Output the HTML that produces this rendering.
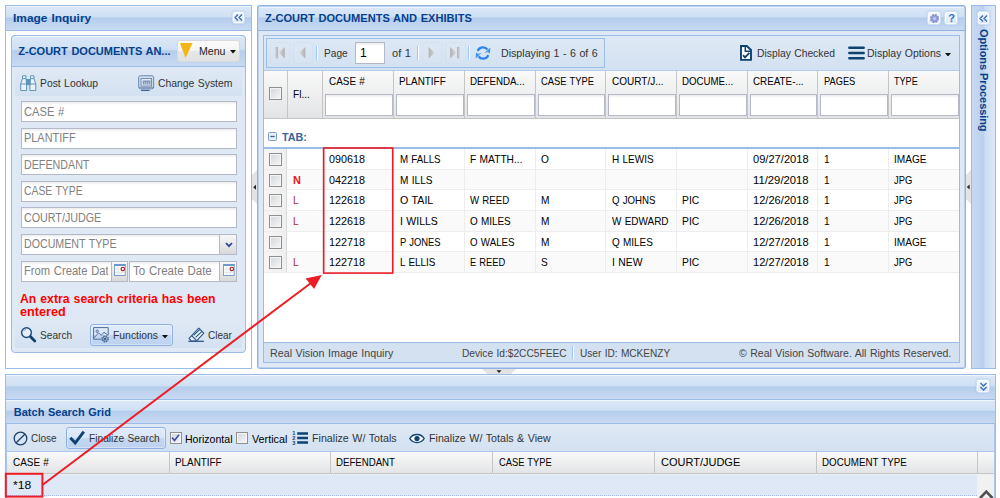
<!DOCTYPE html>
<html><head><meta charset="utf-8"><title>Image Inquiry</title>
<style>
*{box-sizing:border-box;margin:0;padding:0}
html,body{width:1000px;height:498px;overflow:hidden;background:#fff}
body{position:relative;font-family:"Liberation Sans",sans-serif;font-size:11px;color:#000}
.abs{position:absolute}
.hdr{position:absolute;background:linear-gradient(#dbe8f7 0%,#d0e0f4 44%,#b5cdec 50%,#c8daf2 100%);border:1px solid #99bce8;box-shadow:inset 0 1px 0 rgba(255,255,255,.6)}
.tool{position:absolute;border:1px solid #cfe0f6;border-radius:3px;background:linear-gradient(#f6faff,#d6e6fa);box-shadow:inset 0 0 0 1px rgba(255,255,255,.9),0 0 0 1px rgba(160,190,230,.25)}
.t{position:absolute;white-space:pre;transform-origin:0 0}
.fld{position:absolute;border:1px solid #b5b8c8;background:linear-gradient(#ececec 0,#fff 3px) #fff}
.trg{position:absolute;border:1px solid #b5b8c8;border-left:0;background:linear-gradient(#f7f7f7,#d9d9d9)}
.btn{position:absolute;border:1px solid #8fb1e2;border-radius:3px;background:linear-gradient(#e0ebfa 0,#d8e6f8 48%,#c3d7f2 52%,#bdd2ef 100%);box-shadow:inset 0 0 0 1px rgba(255,255,255,.35)}
.gh{position:absolute;background:linear-gradient(#f9f9f9,#e3e4e6);border-right:1px solid #c5c5c5;border-bottom:1px solid #c5c5c5}
.cb{position:absolute;width:13px;height:13px;border:1px solid #8e8f8f;background:linear-gradient(135deg,#d2d6db,#f7f7f7);box-shadow:inset 0 0 0 1px #f5f5f5}
</style></head><body>
<div class="abs" style="left:5px;top:5px;width:247px;height:364px;border:1px solid #99bce8;background:#fff"></div>
<div class="hdr" style="left:5px;top:5px;width:247px;height:26px;"></div>
<div class="t" style="left:12.5px;top:12px;font-size:11px;line-height:12px;color:#04408c;font-weight:bold;word-spacing:0.55px;transform:scaleX(1.0849);">Image Inquiry</div>
<div class="tool" style="left:232px;top:11px;width:13px;height:13px;"></div>
<svg class="abs" style="left:234px;top:14px" width="9" height="7" viewBox="0 0 9 7"><path d="M4 .5 L1 3.5 L4 6.5 M8 .5 L5 3.5 L8 6.5" fill="none" stroke="#3b6cb5" stroke-width="1.3"/></svg>
<div class="abs" style="left:11px;top:35px;width:235px;height:318px;border:1px solid #99bce8;border-radius:4px;background:#dfe9f6"></div>
<div class="hdr" style="left:11px;top:35px;width:235px;height:32px;border-radius:4px 4px 0 0"></div>
<div class="t" style="left:18.3px;top:45px;font-size:11px;line-height:12px;color:#04408c;font-weight:bold;word-spacing:0.55px;">Z-COURT DOCUMENTS AN...</div>
<div class="abs" style="left:177px;top:40px;width:63px;height:22px;border:1px solid #d9d9d9;border-radius:3px;background:linear-gradient(#fbfbfb 0,#f4f4f4 48%,#e6e6e6 52%,#e2e2e2 100%)"></div>
<svg class="abs" style="left:179px;top:42px" width="14" height="17" viewBox="0 0 14 17"><path d="M1 1 L13.5 1 L6.5 16 Z" fill="#f4b514"/></svg>
<div class="t" style="left:198.9px;top:45px;font-size:11px;line-height:12px;color:#222;transform:scaleX(0.9589);">Menu</div>
<svg class="abs" style="left:229.5px;top:50px" width="6" height="3.5" viewBox="0 0 6 3.5"><path d="M0 0h6L3 3.5z" fill="#111"/></svg>
<div class="abs" style="left:15px;top:70px;width:227px;height:26px;background:linear-gradient(#dfe9f5,#d3e1f1)"></div>
<svg class="abs" style="left:20px;top:75px" width="17" height="17" viewBox="0 0 17 17"><g fill="#eaf1f8" stroke="#5f93b8" stroke-width="1"><path d="M2.5 .8 H6 V3.6 L6.6 9 V15.5 H.7 V9 L2.5 3.6 Z"/><path d="M10.5 .8 H14 V3.6 L15.8 9 V15.5 H9.9 V9 L10.5 3.6 Z"/><path d="M.7 9 H6.6 M9.9 9 H15.8 M2.5 3.6 H6 M10.5 3.6 H14" fill="none"/><rect x="6.6" y="4.6" width="3.3" height="5" fill="#5f93b8"/></g></svg>
<div class="t" style="left:40.2px;top:77px;font-size:11px;line-height:12px;color:#333;word-spacing:0.55px;transform:scaleX(0.9416);">Post Lookup</div>
<svg class="abs" style="left:138px;top:75px" width="17" height="17" viewBox="0 0 17 17"><g stroke="#6484ad" stroke-width="1"><rect x=".7" y=".8" width="15" height="13" rx="1.8" fill="#d9e3f0"/><rect x="3" y="3.6" width="10.6" height="7.4" fill="#f4f7fb"/><path d="M1 12.4 H15.4" fill="none" stroke-width=".8"/><path d="M3 15.4 H11.6" fill="none" stroke="#46668f" stroke-width="1.3"/></g><rect x="4.6" y="5.4" width="8" height="4.2" fill="#7d98bb"/><path d="M6.6 7 V9.6 M8.6 7 V9.6 M10.6 7 V9.6" stroke="#dbe5f1" stroke-width=".6"/></svg>
<div class="t" style="left:157.5px;top:77px;font-size:11px;line-height:12px;color:#333;word-spacing:0.55px;transform:scaleX(0.9440);">Change System</div>
<div class="fld" style="left:21px;top:101.3px;width:216px;height:21px;"></div>
<div class="t" style="left:24.1px;top:105px;font-size:12px;line-height:14px;color:#808080;word-spacing:0.60px;transform:scaleX(0.9287);">CASE #</div>
<div class="fld" style="left:21px;top:127.8px;width:216px;height:21px;"></div>
<div class="t" style="left:24.1px;top:131px;font-size:12px;line-height:14px;color:#808080;transform:scaleX(0.9105);">PLANTIFF</div>
<div class="fld" style="left:21px;top:154.3px;width:216px;height:21px;"></div>
<div class="t" style="left:24.1px;top:158px;font-size:12px;line-height:14px;color:#808080;transform:scaleX(0.8917);">DEFENDANT</div>
<div class="fld" style="left:21px;top:180.8px;width:216px;height:21px;"></div>
<div class="t" style="left:24.1px;top:184px;font-size:12px;line-height:14px;color:#808080;word-spacing:0.60px;transform:scaleX(0.8651);">CASE TYPE</div>
<div class="fld" style="left:21px;top:207.3px;width:216px;height:21px;"></div>
<div class="t" style="left:24.1px;top:211px;font-size:12px;line-height:14px;color:#808080;transform:scaleX(0.8930);">COURT/JUDGE</div>
<div class="fld" style="left:21px;top:234px;width:199px;height:21px;"></div>
<div class="t" style="left:24.1px;top:237px;font-size:12px;line-height:14px;color:#808080;word-spacing:0.60px;transform:scaleX(0.8879);">DOCUMENT TYPE</div>
<div class="trg" style="left:220px;top:234px;width:17px;height:21px;"></div>
<svg class="abs" style="left:224.5px;top:241.5px" width="8" height="6" viewBox="0 0 8 6"><path d="M1 1 L4 4.2 L7 1" fill="none" stroke="#27479a" stroke-width="1.8"/></svg>
<div class="fld" style="left:21px;top:260.5px;width:91px;height:21px;overflow:hidden"></div>
<div class="abs" style="left:22px;top:261px;width:86px;height:19px;overflow:hidden">
<div class="t" style="left:2.1px;top:3px;font-size:12px;line-height:14px;color:#808080;word-spacing:0.60px;transform:scaleX(0.9339);">From Create Date</div>
</div>
<div class="trg" style="left:112px;top:260.5px;width:16px;height:21px;"></div>
<svg class="abs" style="left:114px;top:264px" width="12" height="12" viewBox="0 0 12 12"><rect x=".5" y=".5" width="10.6" height="11" fill="#fff" stroke="#7b9fd0"/><rect x="0" y="0" width="11.6" height="2" fill="#6f97cf"/><path d="M1 5.2h9.6M1 8.4h9.6M4 2.5v8.5M7.3 2.5v8.5" stroke="#e3e6ea" stroke-width="1.1" fill="none"/><circle cx="8.8" cy="5" r="1.7" fill="#fff" stroke="#a51717" stroke-width="1.1"/></svg>
<div class="fld" style="left:129px;top:260.5px;width:91px;height:21px;"></div>
<div class="t" style="left:132.5px;top:264px;font-size:12px;line-height:14px;color:#808080;word-spacing:0.60px;transform:scaleX(0.9619);">To Create Date</div>
<div class="trg" style="left:220px;top:260.5px;width:17px;height:21px;"></div>
<svg class="abs" style="left:222.5px;top:264px" width="12" height="12" viewBox="0 0 12 12"><rect x=".5" y=".5" width="10.6" height="11" fill="#fff" stroke="#7b9fd0"/><rect x="0" y="0" width="11.6" height="2" fill="#6f97cf"/><path d="M1 5.2h9.6M1 8.4h9.6M4 2.5v8.5M7.3 2.5v8.5" stroke="#e3e6ea" stroke-width="1.1" fill="none"/><circle cx="8.8" cy="5" r="1.7" fill="#fff" stroke="#a51717" stroke-width="1.1"/></svg>
<div class="t" style="left:20.3px;top:292px;font-size:12px;line-height:14px;color:#f00;font-weight:bold;word-spacing:0.60px;transform:scaleX(1.0195);">An extra search criteria has been</div>
<div class="t" style="left:20.3px;top:305px;font-size:12px;line-height:14px;color:#f00;font-weight:bold;transform:scaleX(1.0563);">entered</div>
<div class="abs" style="left:15px;top:322px;width:227px;height:26px;background:linear-gradient(#dfe9f5,#d3e1f1)"></div>
<svg class="abs" style="left:20px;top:326px" width="17" height="17" viewBox="0 0 17 17"><circle cx="6.5" cy="6.6" r="4.9" fill="#e6eef8" stroke="#1d4a79" stroke-width="1.4"/><path d="M3.7 5.4 A3.2 3.2 0 0 1 6 3.4" fill="none" stroke="#7b9bbd" stroke-width=".9"/><path d="M10.6 10.8 L14.8 15" stroke="#173f6c" stroke-width="2.8" stroke-linecap="round"/></svg>
<div class="t" style="left:40.2px;top:329px;font-size:11px;line-height:12px;color:#333;transform:scaleX(0.9208);">Search</div>
<div class="btn" style="left:90px;top:324px;width:83px;height:22px;"></div>
<svg class="abs" style="left:93px;top:327px" width="17" height="17" viewBox="0 0 17 17"><g fill="none" stroke="#4d6e98" stroke-width="1"><path d="M8.6 12.2 H.6 V.6 H15.2 V8.2"/><path d="M.8 11 L5.6 5.9 L8.4 8.4 L11 5.2 L15 8.4"/><circle cx="4.2" cy="4.2" r="1.2"/><circle cx="12.1" cy="11.9" r="3" stroke-width="1.5" stroke-dasharray="1.5 .86"/><circle cx="12.1" cy="11.9" r="2.2" fill="#dbe7f6"/></g><rect x="11.1" y="10.9" width="2" height="2" fill="#34557f"/></svg>
<div class="t" style="left:113.0px;top:329px;font-size:11px;line-height:12px;color:#333;transform:scaleX(0.9433);">Functions</div>
<svg class="abs" style="left:162px;top:334.5px" width="6" height="3.5" viewBox="0 0 6 3.5"><path d="M0 0h6L3 3.5z" fill="#111"/></svg>
<svg class="abs" style="left:188px;top:327px" width="17" height="17" viewBox="0 0 17 17"><g fill="none" stroke="#2b5b8c" stroke-width="1.2" stroke-linejoin="round"><path d="M10.8 1.2 L15.8 6.2 L8.4 14.1 H3.4 L1.1 11.4 Z" fill="#eef3f9"/><path d="M3.6 8.6 L8.3 13.2 M5.6 8.4 L11.9 2.4 M7.6 10.4 L13.9 4.4"/><path d="M.4 14.3 H15.9" stroke-width="1.3"/></g></svg>
<div class="t" style="left:207.9px;top:329px;font-size:11px;line-height:12px;color:#333;transform:scaleX(0.9089);">Clear</div>
<div class="abs" style="left:257px;top:5px;width:708.5px;height:364px;border:1px solid #8fb3e4;border-radius:3px;background:#dfe9f6;box-shadow:inset 0 0 0 1px #b9d0ef"></div>
<div class="hdr" style="left:257px;top:5px;width:708.5px;height:26px;border-radius:3px 3px 0 0;border-color:#8fb3e4;box-shadow:inset 0 1px 0 #b9d0ef,inset 1px 0 0 #b9d0ef,inset -1px 0 0 #b9d0ef,inset 0 2px 0 rgba(255,255,255,.5)"></div>
<div class="t" style="left:265.0px;top:12px;font-size:11px;line-height:12px;color:#04408c;font-weight:bold;word-spacing:0.55px;transform:scaleX(1.0070);">Z-COURT DOCUMENTS AND EXHIBITS</div>
<div class="tool" style="left:927px;top:11px;width:14px;height:14px;"></div>
<svg class="abs" style="left:928.5px;top:12.5px" width="11" height="11" viewBox="0 0 11 11"><circle cx="5.5" cy="5.5" r="3.5" fill="#9098d8" stroke="#8088cf" stroke-width="2" stroke-dasharray="1.7 1.05"/><circle cx="5.5" cy="5.5" r="3.1" fill="#959dda"/><circle cx="5.5" cy="5.5" r="1.5" fill="#c5cbee"/></svg>
<div class="tool" style="left:944px;top:11px;width:14px;height:14px;"></div>
<div class="t" style="left:948.3px;top:12px;font-size:11px;line-height:12px;color:#3a6fb5;font-weight:bold;">?</div>
<div class="abs" style="left:263px;top:35px;width:697px;height:328px;border:1px solid #99bce8;background:#fff"></div>
<div class="abs" style="left:264px;top:36px;width:695px;height:35px;background:linear-gradient(#dfe9f5,#d3e1f1);border-bottom:1px solid #b4cdee"></div>
<div class="abs" style="left:266px;top:38px;width:339px;height:30px;border:1px solid #9abde9;background:linear-gradient(#dde8f5,#d3e1f1)"></div>
<svg class="abs" style="left:0;top:0" width="0" height="0"><defs><linearGradient id="gl" x1="0" y1="0" x2="1" y2="0"><stop offset="0" stop-color="#dadada"/><stop offset="1" stop-color="#b0b0b0"/></linearGradient><linearGradient id="gr" x1="0" y1="0" x2="1" y2="0"><stop offset="0" stop-color="#b0b0b0"/><stop offset="1" stop-color="#dadada"/></linearGradient></defs></svg>
<div class="abs" style="left:269.5px;top:42px;width:20.5px;height:21.5px;border:1px solid rgba(206,218,234,.45);border-radius:3px;background:rgba(255,255,255,.04)"></div>
<div class="abs" style="left:292.5px;top:42px;width:20.5px;height:21.5px;border:1px solid rgba(206,218,234,.45);border-radius:3px;background:rgba(255,255,255,.04)"></div>
<svg class="abs" style="left:274px;top:46px" width="12" height="13" viewBox="0 0 12 13"><rect x=".9" y=".9" width="3.1" height="11.6" fill="url(#gl)"/><path d="M10.8 .9 L4.7 6.7 L10.8 12.5 Z" fill="url(#gl)"/></svg>
<svg class="abs" style="left:298px;top:46px" width="8" height="13" viewBox="0 0 8 13"><path d="M7.3 .9 L1.2 6.7 L7.3 12.5 Z" fill="url(#gl)"/></svg>
<div class="abs" style="left:316px;top:46px;width:2px;height:14px;background:linear-gradient(90deg,#98c8ff 50%,#fff 50%)"></div>
<div class="t" style="left:323.5px;top:47px;font-size:11px;line-height:12px;color:#333;transform:scaleX(0.9221);">Page</div>
<div class="fld" style="left:355px;top:42px;width:30px;height:22px;"></div>
<div class="t" style="left:360.0px;top:46px;font-size:12px;line-height:14px;color:#000;">1</div>
<div class="t" style="left:391.8px;top:47px;font-size:11px;line-height:12px;color:#333;word-spacing:0.55px;transform:scaleX(1.0048);">of 1</div>
<div class="abs" style="left:417px;top:46px;width:2px;height:14px;background:linear-gradient(90deg,#98c8ff 50%,#fff 50%)"></div>
<div class="abs" style="left:421.5px;top:42px;width:20.5px;height:21.5px;border:1px solid rgba(206,218,234,.45);border-radius:3px;background:rgba(255,255,255,.04)"></div>
<div class="abs" style="left:445px;top:42px;width:20.5px;height:21.5px;border:1px solid rgba(206,218,234,.45);border-radius:3px;background:rgba(255,255,255,.04)"></div>
<svg class="abs" style="left:428px;top:46px" width="8" height="13" viewBox="0 0 8 13"><path d="M.7 .9 L6.8 6.7 L.7 12.5 Z" fill="url(#gr)"/></svg>
<svg class="abs" style="left:449px;top:46px" width="12" height="13" viewBox="0 0 12 13"><rect x="8" y=".9" width="3.1" height="11.6" fill="url(#gr)"/><path d="M1.2 .9 L7.3 6.7 L1.2 12.5 Z" fill="url(#gr)"/></svg>
<div class="abs" style="left:468px;top:46px;width:2px;height:14px;background:linear-gradient(90deg,#98c8ff 50%,#fff 50%)"></div>
<svg class="abs" style="left:475px;top:45px" width="16" height="16" viewBox="0 0 16 16"><path d="M2.72 5.86 A5.7 5.7 0 0 1 12.49 4.49" fill="none" stroke="#2f86e8" stroke-width="2.3"/><path d="M15.3 2.8 L15 8.3 L9.6 7.7 Z" fill="#3d8fec"/><path d="M13.28 10.14 A5.7 5.7 0 0 1 3.51 11.51" fill="none" stroke="#2f86e8" stroke-width="2.3"/><path d="M.7 13.2 L1 7.7 L6.4 8.3 Z" fill="#3d8fec"/><path d="M9.6 7.7 L15 8.3 L12.4 6.4 Z M1 7.7 L6.4 8.3 L3.6 9.6 Z" fill="#a5d0f9"/></svg>
<div class="t" style="left:501.0px;top:47px;font-size:11px;line-height:12px;color:#333;word-spacing:0.55px;transform:scaleX(0.9673);">Displaying 1 - 6 of 6</div>
<svg class="abs" style="left:739px;top:44px" width="14" height="18" viewBox="0 0 14 18"><path d="M2 2 H7.8 L12 6 V15.9 H2 Z" fill="#fff" stroke="#0d4273" stroke-width="1.9"/><path d="M6.3 3 V7.3 H11.4" fill="none" stroke="#0d4273" stroke-width="1.5"/><path d="M4.1 11.2 L6 13.4 L10.4 8.9" fill="none" stroke="#0d4273" stroke-width="1.8"/></svg>
<div class="t" style="left:757.3px;top:47px;font-size:11px;line-height:12px;color:#333;word-spacing:0.55px;transform:scaleX(0.9375);">Display Checked</div>
<svg class="abs" style="left:847.8px;top:46px" width="17" height="14" viewBox="0 0 17 14"><path d="M1.3 1.7 H15.7 M1.3 7 H15.7 M1.3 12.3 H15.7" stroke="#0d4273" stroke-width="2.4" stroke-linecap="round"/></svg>
<div class="t" style="left:867.3px;top:47px;font-size:11px;line-height:12px;color:#333;word-spacing:0.55px;transform:scaleX(0.9536);">Display Options</div>
<svg class="abs" style="left:945px;top:52.5px" width="6" height="3.5" viewBox="0 0 6 3.5"><path d="M0 0h6L3 3.5z" fill="#111"/></svg>
<div class="abs" style="left:264px;top:71px;width:695px;height:48px;background:linear-gradient(#f9f9f9,#e3e4e6);border-bottom:1px solid #c5c5c5"></div>
<div class="abs" style="left:287px;top:71px;width:1px;height:47px;background:#c5c5c5"></div>
<div class="abs" style="left:322px;top:71px;width:1px;height:47px;background:#c5c5c5"></div>
<div class="abs" style="left:393px;top:71px;width:1px;height:47px;background:#c5c5c5"></div>
<div class="abs" style="left:464px;top:71px;width:1px;height:47px;background:#c5c5c5"></div>
<div class="abs" style="left:535px;top:71px;width:1px;height:47px;background:#c5c5c5"></div>
<div class="abs" style="left:605px;top:71px;width:1px;height:47px;background:#c5c5c5"></div>
<div class="abs" style="left:676px;top:71px;width:1px;height:47px;background:#c5c5c5"></div>
<div class="abs" style="left:747px;top:71px;width:1px;height:47px;background:#c5c5c5"></div>
<div class="abs" style="left:817px;top:71px;width:1px;height:47px;background:#c5c5c5"></div>
<div class="abs" style="left:888px;top:71px;width:1px;height:47px;background:#c5c5c5"></div>
<div class="cb" style="left:269px;top:87px;width:13px;height:13px;"></div>
<div class="t" style="left:293.1px;top:88px;font-size:11px;line-height:12px;color:#000;transform:scaleX(0.9158);">Fl...</div>
<div class="t" style="left:328.7px;top:75px;font-size:11px;line-height:12px;color:#000;word-spacing:0.55px;transform:scaleX(0.9020);">CASE #</div>
<div class="fld" style="left:325px;top:94px;width:68px;height:21.5px;border-color:#b5b8c8"></div>
<div class="t" style="left:399.4px;top:75px;font-size:11px;line-height:12px;color:#000;transform:scaleX(0.8989);">PLANTIFF</div>
<div class="fld" style="left:396px;top:94px;width:68px;height:21.5px;border-color:#b5b8c8"></div>
<div class="t" style="left:470.1px;top:75px;font-size:11px;line-height:12px;color:#000;transform:scaleX(0.8861);">DEFENDA...</div>
<div class="fld" style="left:467px;top:94px;width:68px;height:21.5px;border-color:#b5b8c8"></div>
<div class="t" style="left:540.8px;top:75px;font-size:11px;line-height:12px;color:#000;word-spacing:0.55px;transform:scaleX(0.8519);">CASE TYPE</div>
<div class="fld" style="left:538px;top:94px;width:67px;height:21.5px;border-color:#b5b8c8"></div>
<div class="t" style="left:611.5px;top:75px;font-size:11px;line-height:12px;color:#000;transform:scaleX(0.9092);">COURT/J...</div>
<div class="fld" style="left:608px;top:94px;width:68px;height:21.5px;border-color:#b5b8c8"></div>
<div class="t" style="left:682.2px;top:75px;font-size:11px;line-height:12px;color:#000;transform:scaleX(0.8801);">DOCUME...</div>
<div class="fld" style="left:679px;top:94px;width:68px;height:21.5px;border-color:#b5b8c8"></div>
<div class="t" style="left:752.9px;top:75px;font-size:11px;line-height:12px;color:#000;transform:scaleX(0.8934);">CREATE-...</div>
<div class="fld" style="left:750px;top:94px;width:67px;height:21.5px;border-color:#b5b8c8"></div>
<div class="t" style="left:823.6px;top:75px;font-size:11px;line-height:12px;color:#000;transform:scaleX(0.8438);">PAGES</div>
<div class="fld" style="left:820px;top:94px;width:68px;height:21.5px;border-color:#b5b8c8"></div>
<div class="t" style="left:894.3px;top:75px;font-size:11px;line-height:12px;color:#000;transform:scaleX(0.8248);">TYPE</div>
<div class="fld" style="left:891px;top:94px;width:68px;height:21.5px;border-color:#b5b8c8"></div>
<svg class="abs" style="left:268px;top:132px" width="9" height="9" viewBox="0 0 9 9"><rect x=".5" y=".5" width="8" height="8" rx="1" fill="#e9f0fa" stroke="#7a9bc9"/><path d="M2.3 4.5h4.4" stroke="#3b5f94" stroke-width="1.3"/></svg>
<div class="t" style="left:281.8px;top:131px;font-size:11px;line-height:12px;color:#3764a0;font-weight:bold;transform:scaleX(0.9777);">TAB:</div>
<div class="abs" style="left:264px;top:147px;width:695px;height:2px;background:#99bbe8"></div>
<div class="abs" style="left:264px;top:149px;width:695px;height:21px;background:#fff;border-bottom:1px solid #ededed"></div>
<div class="abs" style="left:264px;top:149px;width:23px;height:20px;background:linear-gradient(90deg,#f6f6f6,#efefef);border-right:1px solid #d9d9d9"></div>
<div class="cb" style="left:269px;top:153px;width:13px;height:13px;"></div>
<div class="abs" style="left:322px;top:149px;width:1px;height:21px;background:#ededed"></div>
<div class="abs" style="left:393px;top:149px;width:1px;height:21px;background:#ededed"></div>
<div class="abs" style="left:464px;top:149px;width:1px;height:21px;background:#ededed"></div>
<div class="abs" style="left:535px;top:149px;width:1px;height:21px;background:#ededed"></div>
<div class="abs" style="left:605px;top:149px;width:1px;height:21px;background:#ededed"></div>
<div class="abs" style="left:676px;top:149px;width:1px;height:21px;background:#ededed"></div>
<div class="abs" style="left:747px;top:149px;width:1px;height:21px;background:#ededed"></div>
<div class="abs" style="left:817px;top:149px;width:1px;height:21px;background:#ededed"></div>
<div class="abs" style="left:888px;top:149px;width:1px;height:21px;background:#ededed"></div>
<div class="t" style="left:328.5px;top:153px;font-size:11px;line-height:12px;color:#000;transform:scaleX(0.9777);">090618</div>
<div class="t" style="left:399.5px;top:153px;font-size:11px;line-height:12px;color:#000;word-spacing:0.55px;transform:scaleX(0.8865);">M FALLS</div>
<div class="t" style="left:470.2px;top:153px;font-size:11px;line-height:12px;color:#000;word-spacing:0.55px;transform:scaleX(0.9281);">F MATTH...</div>
<div class="t" style="left:540.9px;top:153px;font-size:11px;line-height:12px;color:#000;transform:scaleX(0.9200);">O</div>
<div class="t" style="left:611.6px;top:153px;font-size:11px;line-height:12px;color:#000;word-spacing:0.55px;transform:scaleX(0.9086);">H LEWIS</div>
<div class="t" style="left:752.5px;top:153px;font-size:11px;line-height:12px;color:#000;transform:scaleX(1.0098);">09/27/2018</div>
<div class="t" style="left:824.0px;top:153px;font-size:11px;line-height:12px;color:#000;transform:scaleX(0.9200);">1</div>
<div class="t" style="left:893.5px;top:153px;font-size:11px;line-height:12px;color:#000;transform:scaleX(0.9195);">IMAGE</div>
<div class="abs" style="left:264px;top:170px;width:695px;height:20px;background:#fafafa;border-bottom:1px solid #ededed"></div>
<div class="abs" style="left:264px;top:170px;width:23px;height:19px;background:linear-gradient(90deg,#f6f6f6,#efefef);border-right:1px solid #d9d9d9"></div>
<div class="cb" style="left:269px;top:174px;width:13px;height:13px;"></div>
<div class="abs" style="left:322px;top:170px;width:1px;height:20px;background:#ededed"></div>
<div class="abs" style="left:393px;top:170px;width:1px;height:20px;background:#ededed"></div>
<div class="abs" style="left:464px;top:170px;width:1px;height:20px;background:#ededed"></div>
<div class="abs" style="left:535px;top:170px;width:1px;height:20px;background:#ededed"></div>
<div class="abs" style="left:605px;top:170px;width:1px;height:20px;background:#ededed"></div>
<div class="abs" style="left:676px;top:170px;width:1px;height:20px;background:#ededed"></div>
<div class="abs" style="left:747px;top:170px;width:1px;height:20px;background:#ededed"></div>
<div class="abs" style="left:817px;top:170px;width:1px;height:20px;background:#ededed"></div>
<div class="abs" style="left:888px;top:170px;width:1px;height:20px;background:#ededed"></div>
<div class="t" style="left:293.1px;top:174px;font-size:11px;line-height:12px;color:#e8141c;font-weight:bold;transform:scaleX(0.9933);">N</div>
<div class="t" style="left:328.5px;top:174px;font-size:11px;line-height:12px;color:#000;transform:scaleX(0.9777);">042218</div>
<div class="t" style="left:399.5px;top:174px;font-size:11px;line-height:12px;color:#000;word-spacing:0.55px;transform:scaleX(0.9178);">M ILLS</div>
<div class="t" style="left:752.5px;top:174px;font-size:11px;line-height:12px;color:#000;transform:scaleX(1.0249);">11/29/2018</div>
<div class="t" style="left:824.0px;top:174px;font-size:11px;line-height:12px;color:#000;transform:scaleX(0.9200);">1</div>
<div class="t" style="left:893.5px;top:174px;font-size:11px;line-height:12px;color:#000;transform:scaleX(0.8549);">JPG</div>
<div class="abs" style="left:264px;top:190px;width:695px;height:21px;background:#fff;border-bottom:1px solid #ededed"></div>
<div class="abs" style="left:264px;top:190px;width:23px;height:20px;background:linear-gradient(90deg,#f6f6f6,#efefef);border-right:1px solid #d9d9d9"></div>
<div class="cb" style="left:269px;top:194px;width:13px;height:13px;"></div>
<div class="abs" style="left:322px;top:190px;width:1px;height:21px;background:#ededed"></div>
<div class="abs" style="left:393px;top:190px;width:1px;height:21px;background:#ededed"></div>
<div class="abs" style="left:464px;top:190px;width:1px;height:21px;background:#ededed"></div>
<div class="abs" style="left:535px;top:190px;width:1px;height:21px;background:#ededed"></div>
<div class="abs" style="left:605px;top:190px;width:1px;height:21px;background:#ededed"></div>
<div class="abs" style="left:676px;top:190px;width:1px;height:21px;background:#ededed"></div>
<div class="abs" style="left:747px;top:190px;width:1px;height:21px;background:#ededed"></div>
<div class="abs" style="left:817px;top:190px;width:1px;height:21px;background:#ededed"></div>
<div class="abs" style="left:888px;top:190px;width:1px;height:21px;background:#ededed"></div>
<div class="t" style="left:293.1px;top:194px;font-size:11px;line-height:12px;color:#b2282d;transform:scaleX(0.9200);">L</div>
<div class="t" style="left:328.5px;top:194px;font-size:11px;line-height:12px;color:#000;transform:scaleX(0.9777);">122618</div>
<div class="t" style="left:399.5px;top:194px;font-size:11px;line-height:12px;color:#000;word-spacing:0.55px;transform:scaleX(0.9686);">O TAIL</div>
<div class="t" style="left:470.2px;top:194px;font-size:11px;line-height:12px;color:#000;word-spacing:0.55px;transform:scaleX(0.8777);">W REED</div>
<div class="t" style="left:540.9px;top:194px;font-size:11px;line-height:12px;color:#000;transform:scaleX(0.9200);">M</div>
<div class="t" style="left:611.6px;top:194px;font-size:11px;line-height:12px;color:#000;word-spacing:0.55px;transform:scaleX(0.8775);">Q JOHNS</div>
<div class="t" style="left:682.2px;top:194px;font-size:11px;line-height:12px;color:#000;transform:scaleX(0.9376);">PIC</div>
<div class="t" style="left:752.5px;top:194px;font-size:11px;line-height:12px;color:#000;transform:scaleX(1.0098);">12/26/2018</div>
<div class="t" style="left:824.0px;top:194px;font-size:11px;line-height:12px;color:#000;transform:scaleX(0.9200);">1</div>
<div class="t" style="left:893.5px;top:194px;font-size:11px;line-height:12px;color:#000;transform:scaleX(0.8549);">JPG</div>
<div class="abs" style="left:264px;top:211px;width:695px;height:21px;background:#fafafa;border-bottom:1px solid #ededed"></div>
<div class="abs" style="left:264px;top:211px;width:23px;height:20px;background:linear-gradient(90deg,#f6f6f6,#efefef);border-right:1px solid #d9d9d9"></div>
<div class="cb" style="left:269px;top:215px;width:13px;height:13px;"></div>
<div class="abs" style="left:322px;top:211px;width:1px;height:21px;background:#ededed"></div>
<div class="abs" style="left:393px;top:211px;width:1px;height:21px;background:#ededed"></div>
<div class="abs" style="left:464px;top:211px;width:1px;height:21px;background:#ededed"></div>
<div class="abs" style="left:535px;top:211px;width:1px;height:21px;background:#ededed"></div>
<div class="abs" style="left:605px;top:211px;width:1px;height:21px;background:#ededed"></div>
<div class="abs" style="left:676px;top:211px;width:1px;height:21px;background:#ededed"></div>
<div class="abs" style="left:747px;top:211px;width:1px;height:21px;background:#ededed"></div>
<div class="abs" style="left:817px;top:211px;width:1px;height:21px;background:#ededed"></div>
<div class="abs" style="left:888px;top:211px;width:1px;height:21px;background:#ededed"></div>
<div class="t" style="left:293.1px;top:215px;font-size:11px;line-height:12px;color:#b2282d;transform:scaleX(0.9200);">L</div>
<div class="t" style="left:328.5px;top:215px;font-size:11px;line-height:12px;color:#000;transform:scaleX(0.9777);">122618</div>
<div class="t" style="left:399.5px;top:215px;font-size:11px;line-height:12px;color:#000;word-spacing:0.55px;transform:scaleX(0.9527);">I WILLS</div>
<div class="t" style="left:470.2px;top:215px;font-size:11px;line-height:12px;color:#000;word-spacing:0.55px;transform:scaleX(0.9009);">O MILES</div>
<div class="t" style="left:540.9px;top:215px;font-size:11px;line-height:12px;color:#000;transform:scaleX(0.9200);">M</div>
<div class="t" style="left:611.6px;top:215px;font-size:11px;line-height:12px;color:#000;word-spacing:0.55px;transform:scaleX(0.9044);">W EDWARD</div>
<div class="t" style="left:682.2px;top:215px;font-size:11px;line-height:12px;color:#000;transform:scaleX(0.9376);">PIC</div>
<div class="t" style="left:752.5px;top:215px;font-size:11px;line-height:12px;color:#000;transform:scaleX(1.0098);">12/26/2018</div>
<div class="t" style="left:824.0px;top:215px;font-size:11px;line-height:12px;color:#000;transform:scaleX(0.9200);">1</div>
<div class="t" style="left:893.5px;top:215px;font-size:11px;line-height:12px;color:#000;transform:scaleX(0.8549);">JPG</div>
<div class="abs" style="left:264px;top:232px;width:695px;height:20px;background:#fff;border-bottom:1px solid #ededed"></div>
<div class="abs" style="left:264px;top:232px;width:23px;height:19px;background:linear-gradient(90deg,#f6f6f6,#efefef);border-right:1px solid #d9d9d9"></div>
<div class="cb" style="left:269px;top:236px;width:13px;height:13px;"></div>
<div class="abs" style="left:322px;top:232px;width:1px;height:20px;background:#ededed"></div>
<div class="abs" style="left:393px;top:232px;width:1px;height:20px;background:#ededed"></div>
<div class="abs" style="left:464px;top:232px;width:1px;height:20px;background:#ededed"></div>
<div class="abs" style="left:535px;top:232px;width:1px;height:20px;background:#ededed"></div>
<div class="abs" style="left:605px;top:232px;width:1px;height:20px;background:#ededed"></div>
<div class="abs" style="left:676px;top:232px;width:1px;height:20px;background:#ededed"></div>
<div class="abs" style="left:747px;top:232px;width:1px;height:20px;background:#ededed"></div>
<div class="abs" style="left:817px;top:232px;width:1px;height:20px;background:#ededed"></div>
<div class="abs" style="left:888px;top:232px;width:1px;height:20px;background:#ededed"></div>
<div class="t" style="left:328.5px;top:236px;font-size:11px;line-height:12px;color:#000;transform:scaleX(0.9777);">122718</div>
<div class="t" style="left:399.5px;top:236px;font-size:11px;line-height:12px;color:#000;word-spacing:0.55px;transform:scaleX(0.8561);">P JONES</div>
<div class="t" style="left:470.2px;top:236px;font-size:11px;line-height:12px;color:#000;word-spacing:0.55px;transform:scaleX(0.8872);">O WALES</div>
<div class="t" style="left:540.9px;top:236px;font-size:11px;line-height:12px;color:#000;transform:scaleX(0.9200);">M</div>
<div class="t" style="left:611.6px;top:236px;font-size:11px;line-height:12px;color:#000;word-spacing:0.55px;transform:scaleX(0.9032);">Q MILES</div>
<div class="t" style="left:752.5px;top:236px;font-size:11px;line-height:12px;color:#000;transform:scaleX(1.0098);">12/27/2018</div>
<div class="t" style="left:824.0px;top:236px;font-size:11px;line-height:12px;color:#000;transform:scaleX(0.9200);">1</div>
<div class="t" style="left:893.5px;top:236px;font-size:11px;line-height:12px;color:#000;transform:scaleX(0.9195);">IMAGE</div>
<div class="abs" style="left:264px;top:252px;width:695px;height:21px;background:#fafafa;border-bottom:1px solid #ededed"></div>
<div class="abs" style="left:264px;top:252px;width:23px;height:20px;background:linear-gradient(90deg,#f6f6f6,#efefef);border-right:1px solid #d9d9d9"></div>
<div class="cb" style="left:269px;top:256px;width:13px;height:13px;"></div>
<div class="abs" style="left:322px;top:252px;width:1px;height:21px;background:#ededed"></div>
<div class="abs" style="left:393px;top:252px;width:1px;height:21px;background:#ededed"></div>
<div class="abs" style="left:464px;top:252px;width:1px;height:21px;background:#ededed"></div>
<div class="abs" style="left:535px;top:252px;width:1px;height:21px;background:#ededed"></div>
<div class="abs" style="left:605px;top:252px;width:1px;height:21px;background:#ededed"></div>
<div class="abs" style="left:676px;top:252px;width:1px;height:21px;background:#ededed"></div>
<div class="abs" style="left:747px;top:252px;width:1px;height:21px;background:#ededed"></div>
<div class="abs" style="left:817px;top:252px;width:1px;height:21px;background:#ededed"></div>
<div class="abs" style="left:888px;top:252px;width:1px;height:21px;background:#ededed"></div>
<div class="t" style="left:293.1px;top:256px;font-size:11px;line-height:12px;color:#b2282d;transform:scaleX(0.9200);">L</div>
<div class="t" style="left:328.5px;top:256px;font-size:11px;line-height:12px;color:#000;transform:scaleX(0.9777);">122718</div>
<div class="t" style="left:399.5px;top:256px;font-size:11px;line-height:12px;color:#000;word-spacing:0.55px;transform:scaleX(0.9011);">L ELLIS</div>
<div class="t" style="left:470.2px;top:256px;font-size:11px;line-height:12px;color:#000;word-spacing:0.55px;transform:scaleX(0.8478);">E REED</div>
<div class="t" style="left:540.9px;top:256px;font-size:11px;line-height:12px;color:#000;transform:scaleX(0.9200);">S</div>
<div class="t" style="left:611.6px;top:256px;font-size:11px;line-height:12px;color:#000;word-spacing:0.55px;transform:scaleX(0.9403);">I NEW</div>
<div class="t" style="left:682.2px;top:256px;font-size:11px;line-height:12px;color:#000;transform:scaleX(0.9376);">PIC</div>
<div class="t" style="left:752.5px;top:256px;font-size:11px;line-height:12px;color:#000;transform:scaleX(1.0098);">12/27/2018</div>
<div class="t" style="left:824.0px;top:256px;font-size:11px;line-height:12px;color:#000;transform:scaleX(0.9200);">1</div>
<div class="t" style="left:893.5px;top:256px;font-size:11px;line-height:12px;color:#000;transform:scaleX(0.8549);">JPG</div>
<div class="abs" style="left:264px;top:342px;width:695px;height:20px;background:#d3e1f1;border-top:1px solid #99bce8"></div>
<div class="t" style="left:269.5px;top:347px;font-size:11px;line-height:12px;color:#444;word-spacing:0.55px;transform:scaleX(0.9731);">Real Vision Image Inquiry</div>
<div class="t" style="left:461.5px;top:347px;font-size:11px;line-height:12px;color:#444;word-spacing:0.55px;transform:scaleX(0.9253);">Device Id:$2CC5FEEC</div>
<div class="abs" style="left:572px;top:346px;width:2px;height:13px;background:linear-gradient(90deg,#98c8ff 50%,#fff 50%)"></div>
<div class="t" style="left:579.5px;top:347px;font-size:11px;line-height:12px;color:#444;word-spacing:0.55px;transform:scaleX(0.9187);">User ID: MCKENZY</div>
<div class="t" style="left:739.3px;top:347px;font-size:11px;line-height:12px;color:#444;word-spacing:0.55px;transform:scaleX(0.9583);">© Real Vision Software. All Rights Reserved.</div>
<div class="abs" style="left:970.5px;top:5px;width:25px;height:363.5px;border:1px solid #99bce8;background:linear-gradient(90deg,#c6d9f1 0%,#bbd1ee 50%,#cddef3 58%,#dbe8f7 100%)"></div>
<div class="tool" style="left:977px;top:11px;width:13px;height:14px;"></div>
<svg class="abs" style="left:979px;top:14.5px" width="9" height="7" viewBox="0 0 9 7"><path d="M4 .5 L1 3.5 L4 6.5 M8 .5 L5 3.5 L8 6.5" fill="none" stroke="#3b6cb5" stroke-width="1.3"/></svg>
<div class="t" style="left:980px;top:29px;font-size:11px;line-height:12px;font-weight:bold;color:#04408c;letter-spacing:-0.08px;transform-origin:0 0;transform:rotate(90deg) translate(0,-10px)">Options Processing</div>
<svg class="abs" style="left:965px;top:170px" width="6" height="34" viewBox="0 0 6 34"><path d="M6 0 L1 5 V29 L6 34 Z" fill="#e3e3e3"/><path d="M4.6 14.5 L1.8 17 L4.6 19.5 Z" fill="#222"/></svg>
<svg class="abs" style="left:252px;top:170px" width="5" height="34" viewBox="0 0 5 34"><path d="M5 0 L0 5 V29 L5 34 Z" fill="#e2e2e2"/><path d="M4 14.8 L1.2 17.3 L4 19.8 Z" fill="#222"/></svg>
<svg class="abs" style="left:482px;top:368.5px" width="34" height="6" viewBox="0 0 34 6"><path d="M0 0 H34 L29 5 H5 Z" fill="#e3e3e3"/><path d="M14.5 1.2 H19.5 L17 4 Z" fill="#222"/></svg>
<div class="hdr" style="left:5px;top:374px;width:991px;height:26px;"></div>
<div class="tool" style="left:976px;top:379px;width:14px;height:14px;"></div>
<svg class="abs" style="left:978.5px;top:381.5px" width="9" height="9" viewBox="0 0 9 9"><path d="M1.5 1 L4.5 4 L7.5 1 M1.5 5 L4.5 8 L7.5 5" fill="none" stroke="#3b6cb5" stroke-width="1.3"/></svg>
<div class="hdr" style="left:5px;top:399px;width:991px;height:25px;"></div>
<div class="t" style="left:13.8px;top:406px;font-size:11px;line-height:12px;color:#04408c;font-weight:bold;word-spacing:0.55px;">Batch Search Grid</div>
<div class="abs" style="left:5px;top:424px;width:991px;height:28px;background:linear-gradient(#dfe9f5,#d3e1f1);border:1px solid #99bce8;border-top:0;border-bottom:1px solid #a9c6ec"></div>
<svg class="abs" style="left:12.5px;top:430.5px" width="15" height="15" viewBox="0 0 15 15"><circle cx="7.5" cy="7.5" r="6.3" fill="none" stroke="#1d3f6e" stroke-width="1.3"/><path d="M3.2 11.8 L11.8 3.2" stroke="#1d3f6e" stroke-width="1.3"/></svg>
<div class="t" style="left:31.1px;top:432px;font-size:11px;line-height:12px;color:#333;transform:scaleX(0.9102);">Close</div>
<div class="btn" style="left:66px;top:427px;width:100px;height:21.5px;"></div>
<svg class="abs" style="left:69px;top:430px" width="17" height="16" viewBox="0 0 17 16"><path d="M1.4 7.8 L6.2 13 L14.8 1.6" fill="none" stroke="#0d4273" stroke-width="2.9"/></svg>
<div class="t" style="left:88.5px;top:432px;font-size:11px;line-height:12px;color:#333;word-spacing:0.55px;transform:scaleX(0.9270);">Finalize Search</div>
<div class="cb" style="left:169.5px;top:432px;width:12px;height:12px;width:12px;height:12px"></div>
<svg class="abs" style="left:171px;top:434px" width="9" height="8" viewBox="0 0 9 8"><path d="M1 3.5 L3.5 6.5 L8 .8" fill="none" stroke="#3a4ca8" stroke-width="1.6"/></svg>
<div class="t" style="left:185.3px;top:433px;font-size:11px;line-height:12px;color:#000;transform:scaleX(0.9590);">Horizontal</div>
<div class="cb" style="left:236.3px;top:432px;width:12px;height:12px;width:12px;height:12px"></div>
<div class="t" style="left:252.0px;top:433px;font-size:11px;line-height:12px;color:#000;transform:scaleX(0.9784);">Vertical</div>
<svg class="abs" style="left:292px;top:429px" width="17" height="17" viewBox="0 0 17 17"><path d="M5.2 4.4 H16 M5.2 9 H16 M5.2 13.5 H16" stroke="#0d4273" stroke-width="2.5"/><g font-family="Liberation Sans,sans-serif" font-size="5.6" font-weight="bold" fill="#0d4273"><text x=".3" y="5.6">1</text><text x=".3" y="10.9">2</text><text x=".3" y="16.2">3</text></g></svg>
<div class="t" style="left:312.0px;top:432px;font-size:11px;line-height:12px;color:#333;word-spacing:0.55px;transform:scaleX(0.9713);">Finalize W/ Totals</div>
<svg class="abs" style="left:409px;top:433px" width="16" height="11" viewBox="0 0 16 11"><path d="M.8 5.5 C4 .2 12 .2 15.2 5.5 C12 10.8 4 10.8 .8 5.5 Z" fill="#fff" stroke="#0d4273" stroke-width="1.4"/><circle cx="8" cy="5.5" r="2.6" fill="#0d4273"/></svg>
<div class="t" style="left:428.6px;top:432px;font-size:11px;line-height:12px;color:#333;word-spacing:0.55px;transform:scaleX(0.9713);">Finalize W/ Totals &amp; View</div>
<div class="abs" style="left:5px;top:452px;width:991px;height:22px;background:linear-gradient(#f9f9f9,#e3e4e6);border-bottom:1px solid #c5c5c5;border-left:1px solid #99bce8;border-right:1px solid #99bce8"></div>
<div class="abs" style="left:169px;top:452px;width:1px;height:21px;background:#c5c5c5"></div>
<div class="abs" style="left:330px;top:452px;width:1px;height:21px;background:#c5c5c5"></div>
<div class="abs" style="left:492px;top:452px;width:1px;height:21px;background:#c5c5c5"></div>
<div class="abs" style="left:654px;top:452px;width:1px;height:21px;background:#c5c5c5"></div>
<div class="abs" style="left:816px;top:452px;width:1px;height:21px;background:#c5c5c5"></div>
<div class="abs" style="left:977px;top:452px;width:1px;height:21px;background:#c5c5c5"></div>
<div class="t" style="left:12.5px;top:456px;font-size:11px;line-height:12px;color:#000;word-spacing:0.55px;transform:scaleX(0.9020);">CASE #</div>
<div class="t" style="left:174.5px;top:456px;font-size:11px;line-height:12px;color:#000;transform:scaleX(0.8970);">PLANTIFF</div>
<div class="t" style="left:336.3px;top:456px;font-size:11px;line-height:12px;color:#000;transform:scaleX(0.8775);">DEFENDANT</div>
<div class="t" style="left:498.5px;top:456px;font-size:11px;line-height:12px;color:#000;word-spacing:0.55px;transform:scaleX(0.8503);">CASE TYPE</div>
<div class="t" style="left:661.0px;top:456px;font-size:11px;line-height:12px;color:#000;">COURT/JUDGE</div>
<div class="t" style="left:821.9px;top:456px;font-size:11px;line-height:12px;color:#000;word-spacing:0.55px;transform:scaleX(0.8879);">DOCUMENT TYPE</div>
<div class="abs" style="left:6px;top:473.5px;width:971px;height:22.5px;background:#dfe8f6;border-top:1px dotted #f4f6fa;border-bottom:1px dotted #a3bae9"></div>
<div class="abs" style="left:5px;top:473.5px;width:1px;height:25px;background:#99bce8"></div>
<div class="abs" style="left:995px;top:473.5px;width:1px;height:25px;background:#99bce8"></div>
<div class="t" style="left:12.5px;top:479px;font-size:11px;line-height:12px;color:#000;transform:scaleX(1.1009);">*18</div>
<div class="abs" style="left:977px;top:474px;width:18px;height:24px;background:#f1f1f1"></div>
<div class="abs" style="left:994px;top:424px;width:1px;height:74px;background:#a9c6ec"></div>
<div class="abs" style="left:6px;top:424px;width:1px;height:74px;background:#a9c6ec"></div>
<svg class="abs" style="left:979px;top:489px" width="15" height="9" viewBox="0 0 15 9"><path d="M1 9.2 L7.3 2.6 L13.6 9.2" fill="none" stroke="#505050" stroke-width="2.6"/></svg>
<svg class="abs" style="left:0;top:0;pointer-events:none" width="1000" height="498" viewBox="0 0 1000 498"><rect x="323.7" y="148" width="69" height="125.1" fill="none" stroke="#ed1c24" stroke-width="1.6"/><rect x="5.8" y="473.8" width="36.6" height="22.8" fill="none" stroke="#ed1c24" stroke-width="2"/><path d="M42.4 485 L311 283" stroke="#ed1c24" stroke-width="2" fill="none"/><path d="M321.7 274.9 L305.6 278.6 L314.1 288.9 Z" fill="#ed1c24"/></svg>
</body></html>
